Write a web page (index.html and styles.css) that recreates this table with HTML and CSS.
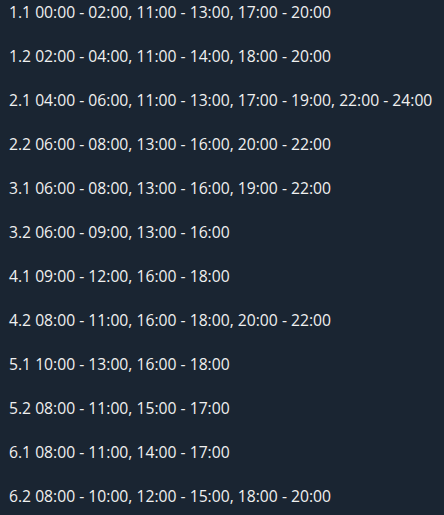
FILE: index.html
```html
<!DOCTYPE html>
<html>
<head>
<meta charset="utf-8">
<link rel="stylesheet" href="styles.css">
</head>
<body>
<div class="list">
  <div class="row">1.1 00:00 - 02:00, 11:00 - 13:00, 17:00 - 20:00</div>
  <div class="row">1.2 02:00 - 04:00, 11:00 - 14:00, 18:00 - 20:00</div>
  <div class="row">2.1 04:00 - 06:00, 11:00 - 13:00, 17:00 - 19:00, 22:00 - 24:00</div>
  <div class="row">2.2 06:00 - 08:00, 13:00 - 16:00, 20:00 - 22:00</div>
  <div class="row">3.1 06:00 - 08:00, 13:00 - 16:00, 19:00 - 22:00</div>
  <div class="row">3.2 06:00 - 09:00, 13:00 - 16:00</div>
  <div class="row">4.1 09:00 - 12:00, 16:00 - 18:00</div>
  <div class="row">4.2 08:00 - 11:00, 16:00 - 18:00, 20:00 - 22:00</div>
  <div class="row">5.1 10:00 - 13:00, 16:00 - 18:00</div>
  <div class="row">5.2 08:00 - 11:00, 15:00 - 17:00</div>
  <div class="row">6.1 08:00 - 11:00, 14:00 - 17:00</div>
  <div class="row">6.2 08:00 - 10:00, 12:00 - 15:00, 18:00 - 20:00</div>
</div>
</body>
</html>
```
FILE: styles.css
```css
html, body {
  margin: 0;
  padding: 0;
  background: #1a2532;
}
body {
  font-family: "Open Sans", sans-serif;
  font-size: 15.7px;
  color: #f0f0f0;
}
.list {
  display: flex;
  flex-direction: column;
  gap: 20px;
  padding-left: 9px;
}
.row {
  line-height: 24px;
  white-space: nowrap;
}
```
